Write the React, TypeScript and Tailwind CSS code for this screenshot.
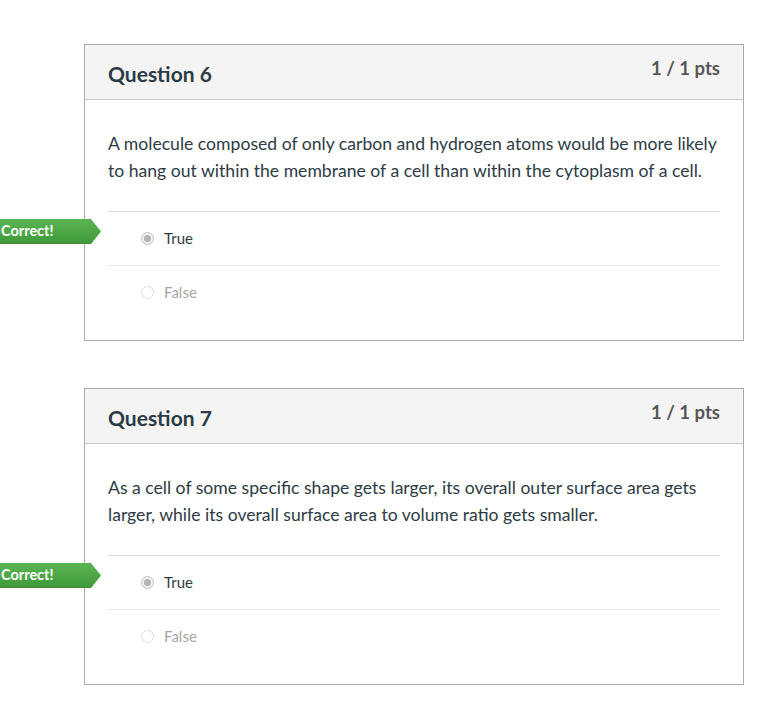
import React from "react";

type Question = {
  number: number;
  text: string[];
};

const questions: Question[] = [
  {
    number: 6,
    text: [
      "A molecule composed of only carbon and hydrogen atoms would be more likely",
      "to hang out within the membrane of a cell than within the cytoplasm of a cell.",
    ],
  },
  {
    number: 7,
    text: [
      "As a cell of some specific shape gets larger, its overall outer surface area gets",
      "larger, while its overall surface area to volume ratio gets smaller.",
    ],
  },
];

function CorrectFlag() {
  return (
    <div className="absolute left-[-109px] top-[7px] flex h-[25px] items-center">
      <div className="flex h-full w-[92px] items-center border-b border-[#3a8a35] bg-gradient-to-b from-[#5bb552] to-[#3f9a3a] pl-[2px] text-[14.5px] font-bold text-white">
        Correct!
      </div>
      <svg width="10" height="25" viewBox="0 0 10 25" className="block">
        <defs>
          <linearGradient id="flagGrad" x1="0" y1="0" x2="0" y2="1">
            <stop offset="0" stopColor="#5bb552" />
            <stop offset="1" stopColor="#3f9a3a" />
          </linearGradient>
        </defs>
        <polygon points="0,0 10,12.5 0,25" fill="url(#flagGrad)" />
      </svg>
    </div>
  );
}

function Radio({ checked }: { checked?: boolean }) {
  return (
    <span
      className={
        checked
          ? "flex h-[13px] w-[13px] items-center justify-center rounded-full border border-[#c4c4c4] bg-[#f0f0f0]"
          : "flex h-[13px] w-[13px] items-center justify-center rounded-full border border-[#dcdcdc] bg-white"
      }
    >
      {checked && <span className="h-[7px] w-[7px] rounded-full bg-[#b5b5b5]" />}
    </span>
  );
}

function Answer({
  label,
  checked,
  correct,
  last,
}: {
  label: string;
  checked?: boolean;
  correct?: boolean;
  last?: boolean;
}) {
  return (
    <div
      className={
        "relative flex items-center gap-[10px] pl-[33px] " +
        (last ? "h-[52px]" : "h-[54px] border-b border-[#e6e6e6]")
      }
    >
      {correct && <CorrectFlag />}
      <Radio checked={checked} />
      <span className={checked ? "text-[15px] text-[#2d3b45]" : "text-[15px] text-[#a5a5a5]"}>
        {label}
      </span>
    </div>
  );
}

function QuestionCard({ q }: { q: Question }) {
  return (
    <section className="relative w-[660px] border border-[#ababab] bg-white">
      <div className="flex h-[55px] items-start justify-between border-b border-[#c7c7c7] bg-[#f4f4f4] px-[23px]">
        <h2 className="mt-[13px] text-[21px] font-bold text-[#2d3b45]">Question {q.number}</h2>
        <span className="mt-[10px] text-[18.5px] font-bold text-[#575757]">1 / 1 pts</span>
      </div>
      <div className="px-[23px] pb-[22px] pt-[30px]">
        <p className="border-b border-[#dcdcdc] pb-[27px] text-[17.6px] leading-[27px] text-[#2d3b45]">
          {q.text.map((line, i) => (
            <span key={i} className="block whitespace-nowrap">
              {line}
            </span>
          ))}
        </p>
        <Answer label="True" checked correct />
        <Answer label="False" last />
      </div>
    </section>
  );
}

export default function App() {
  return (
    <main className="min-h-[710px] bg-white pl-[84px] pt-[44px] font-['Lato',sans-serif]">
      <div className="flex flex-col gap-[47px]">
        {questions.map((q) => (
          <QuestionCard key={q.number} q={q} />
        ))}
      </div>
    </main>
  );
}
